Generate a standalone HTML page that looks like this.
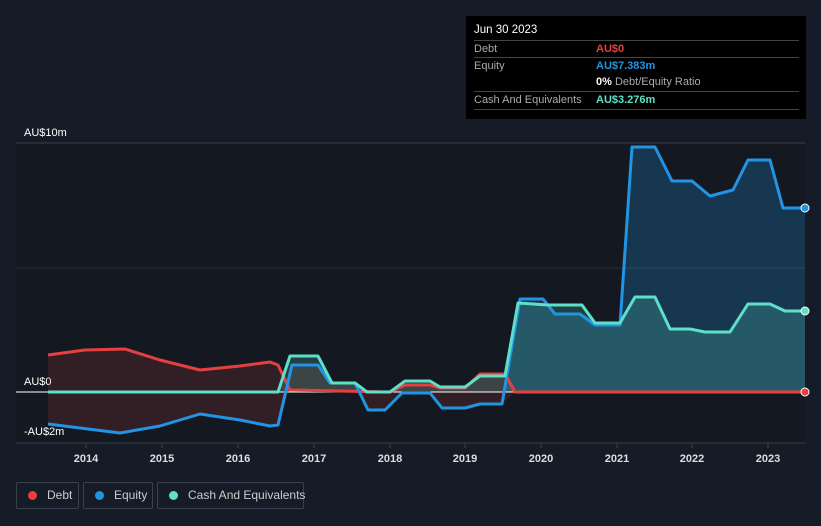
<!DOCTYPE html>
<html><head><style>
body{margin:0;width:821px;height:526px;background:#161c27;font-family:"Liberation Sans",sans-serif;overflow:hidden;position:relative}
.tt{position:absolute;left:466px;top:16px;width:340px;height:103px;background:#000;color:#fff;font-size:11px}
.row{position:absolute;left:8px;width:325px;border-top:1px solid #444;height:17px;line-height:17px}
.lab{color:#aaa;position:absolute;left:0}
.val{position:absolute;left:122px;font-weight:bold;white-space:nowrap}
.leg{position:absolute;top:482px;height:27px;border:1px solid #3a404c;border-radius:2px;color:#ccc;font-size:12px;line-height:25px;box-sizing:border-box;white-space:nowrap}
.dot{display:inline-block;width:9px;height:9px;border-radius:50%;margin:0 10px 0 11px;vertical-align:-1px}
</style></head><body>
<div class="tt">
<div style="position:absolute;left:8px;top:8px;font-size:11.5px">Jun 30 2023</div>
<div class="row" style="top:24px"><span class="lab">Debt</span><span class="val" style="color:#e5403f">AU$0</span></div>
<div class="row" style="top:41px"><span class="lab">Equity</span><span class="val" style="color:#2394e3">AU$7.383m</span></div>
<div class="row" style="top:58px;border-top:none"><span class="val" style="color:#fff">0% <span style="font-weight:normal;color:#aaa">Debt/Equity Ratio</span></span></div>
<div class="row" style="top:75px"><span class="lab">Cash And Equivalents</span><span class="val" style="color:#5ee0c8">AU$3.276m</span></div>
<div class="row" style="top:93px;height:0"></div>
</div>
<svg width="821" height="526" style="position:absolute;left:0;top:0">
<rect x="16" y="143" width="789" height="300" fill="#131821"/>
<line x1="16" y1="143" x2="805" y2="143" stroke="#3a404a"/>
<line x1="16" y1="268" x2="805" y2="268" stroke="#2a303a"/>
<line x1="16" y1="443" x2="805" y2="443" stroke="#3a404a"/>
<text x="24" y="136" fill="#fff" font-size="11">AU$10m</text>
<text x="24" y="385" fill="#fff" font-size="11">AU$0</text>
<text x="24" y="435" fill="#fff" font-size="11">-AU$2m</text>
<g fill="#ddd" font-size="11" font-weight="bold" text-anchor="middle">
<text x="86" y="462">2014</text><text x="162" y="462">2015</text><text x="238" y="462">2016</text><text x="314" y="462">2017</text><text x="390" y="462">2018</text><text x="465" y="462">2019</text><text x="541" y="462">2020</text><text x="617" y="462">2021</text><text x="692" y="462">2022</text><text x="768" y="462">2023</text></g>
<g stroke="#3a404a"><line x1="86" y1="443" x2="86" y2="448"/><line x1="162" y1="443" x2="162" y2="448"/><line x1="238" y1="443" x2="238" y2="448"/><line x1="314" y1="443" x2="314" y2="448"/><line x1="390" y1="443" x2="390" y2="448"/><line x1="465" y1="443" x2="465" y2="448"/><line x1="541" y1="443" x2="541" y2="448"/><line x1="617" y1="443" x2="617" y2="448"/><line x1="692" y1="443" x2="692" y2="448"/><line x1="768" y1="443" x2="768" y2="448"/></g>
<polygon fill="#e5403f" fill-opacity="0.15" points="48,355 85,350 125,349 160,360 200,370 240,366 270,362 278,365 290,390 390,392 405,385 430,385 440,388 465,388 480,374 505,374 515,392 515,392 502,404 480,404 465,408 442,408 430,393 402,393 385,410 368,410 355,383 330,383 318,365 292,365 278,425 270,426 240,420 200,414 160,426 120,433 48,424"/>
<polygon fill="#2394e3" fill-opacity="0.25" points="502,392 502,404 520,299 543,299 555,314 580,314 595,325 620,325 632,147 655,147 672,181 692,181 710,196 733,190 748,160 770,160 783,208 805,208 805,392"/>
<polygon fill="#5ee0c8" fill-opacity="0.2" points="278,392 290,356 318,356 332,383 355,383 367,392 390,392 405,381 430,381 440,387 465,387 480,376 505,376 518,303 548,305 582,305 595,323 620,323 635,297 655,297 670,329 690,329 705,332 730,332 748,304 770,304 785,311 805,311 805,392"/>
<line x1="16" y1="392" x2="805" y2="392" stroke="#fff" stroke-width="1"/>
<g fill="none" stroke-width="3" stroke-linejoin="round">
<polyline stroke="#e5403f" points="48,355 85,350 125,349 160,360 200,370 240,366 270,362 278,365 290,390 390,392 405,385 430,385 440,388 465,388 480,374 505,374 515,392 805,392"/>
<polyline stroke="#2394e3" points="48,424 120,433 160,426 200,414 240,420 270,426 278,425 292,365 318,365 330,383 355,383 368,410 385,410 402,393 430,393 442,408 465,408 480,404 502,404 520,299 543,299 555,314 580,314 595,325 620,325 632,147 655,147 672,181 692,181 710,196 733,190 748,160 770,160 783,208 805,208"/>
<polyline stroke="#5ee0c8" points="48,392 278,392 290,356 318,356 332,383 355,383 367,392 390,392 405,381 430,381 440,387 465,387 480,376 505,376 518,303 548,305 582,305 595,323 620,323 635,297 655,297 670,329 690,329 705,332 730,332 748,304 770,304 785,311 805,311"/>
</g>
<circle cx="805" cy="392" r="4" fill="#e5403f" stroke="#fff"/>
<circle cx="805" cy="208" r="4" fill="#2394e3" stroke="#fff"/>
<circle cx="805" cy="311" r="4" fill="#5ee0c8" stroke="#fff"/>
</svg>
<div class="leg" style="left:16px;width:63px"><span class="dot" style="background:#e5403f"></span>Debt</div>
<div class="leg" style="left:83px;width:70px"><span class="dot" style="background:#2394e3"></span>Equity</div>
<div class="leg" style="left:157px;width:147px"><span class="dot" style="background:#5ee0c8"></span>Cash And Equivalents</div>
</body></html>
